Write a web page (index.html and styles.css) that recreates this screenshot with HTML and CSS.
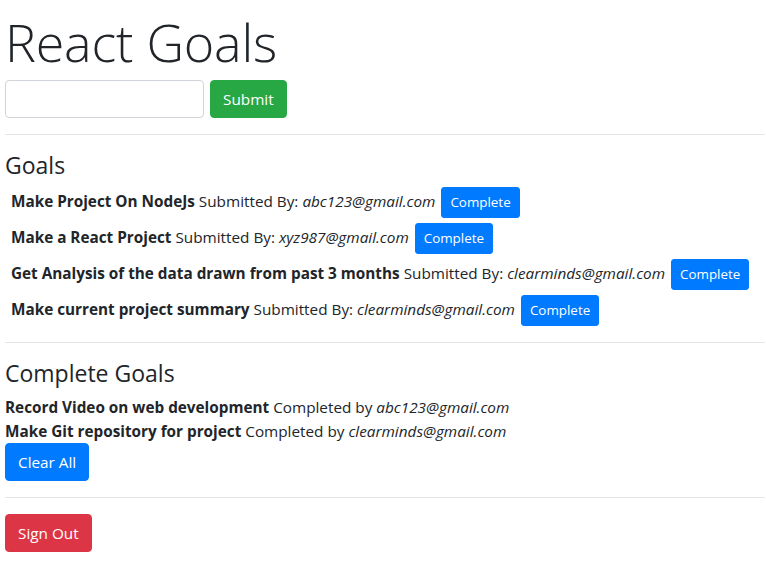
FILE: index.html
```html
<!DOCTYPE html>
<html lang="en">
<head>
<meta charset="utf-8">
<title>React Goals</title>
<link rel="stylesheet" href="styles.css">
</head>
<body>
<div class="app">
  <h1 class="title">React Goals</h1>
  <form class="add-form">
    <input class="field" type="text">
    <button type="button" class="btn btn-success">Submit</button>
  </form>
  <hr class="rule">
  <h4 class="heading">Goals</h4>
  <div class="goal">
    <span class="goal-text"><strong>Make Project On NodeJs</strong> Submitted By: <em>abc123@gmail.com</em></span>
    <button type="button" class="btn btn-primary btn-sm">Complete</button>
  </div>
  <div class="goal">
    <span class="goal-text"><strong>Make a React Project</strong> Submitted By: <em>xyz987@gmail.com</em></span>
    <button type="button" class="btn btn-primary btn-sm">Complete</button>
  </div>
  <div class="goal">
    <span class="goal-text"><strong>Get Analysis of the data drawn from past 3 months</strong> Submitted By: <em>clearminds@gmail.com</em></span>
    <button type="button" class="btn btn-primary btn-sm">Complete</button>
  </div>
  <div class="goal">
    <span class="goal-text"><strong>Make current project summary</strong> Submitted By: <em>clearminds@gmail.com</em></span>
    <button type="button" class="btn btn-primary btn-sm">Complete</button>
  </div>
  <hr class="rule">
  <h4 class="heading">Complete Goals</h4>
  <div class="done"><strong>Record Video on web development</strong> Completed by <em>abc123@gmail.com</em></div>
  <div class="done"><strong>Make Git repository for project</strong> Completed by <em>clearminds@gmail.com</em></div>
  <button type="button" class="btn btn-primary">Clear All</button>
  <hr class="rule">
  <button type="button" class="btn btn-danger">Sign Out</button>
</div>
</body>
</html>
```

FILE: styles.css
```css
html, body {
  margin: 0;
  padding: 0;
  background: #fff;
}

body {
  font-family: "Open Sans", "Noto Sans", sans-serif;
  font-size: 15.3px;
  line-height: 24px;
  color: #212529;
}

.app {
  padding: 5px 1px 0 5px;
}

.title {
  margin: 0 0 2px 0;
  font-size: 52px;
  font-weight: 300;
  line-height: 73px;
  letter-spacing: -0.2px;
}

.add-form {
  display: flex;
  gap: 6px;
  margin: 0;
}

.field {
  box-sizing: border-box;
  width: 199px;
  height: 38px;
  border: 1px solid #ced4da;
  border-radius: 4px;
  padding: 6px 12px;
  font: inherit;
  background: #fff;
}

.rule {
  margin: 16px 0;
  border: 0;
  border-top: 1px solid rgba(0, 0, 0, 0.1);
  height: 0;
}

.heading {
  margin: 0 0 8px 0;
  font-size: 23px;
  font-weight: 500;
  line-height: 28px;
}

strong {
  font-weight: 700;
}

.goal {
  display: flex;
  align-items: flex-start;
  gap: 6px;
  margin: 0 0 5px 0;
  padding-left: 6px;
}

.goal-text {
  padding-top: 2px;
  white-space: nowrap;
}

.btn {
  box-sizing: border-box;
  display: inline-block;
  border: 1px solid transparent;
  border-radius: 4px;
  padding: 6px 12px;
  height: 38px;
  font-family: inherit;
  font-size: 15.3px;
  line-height: 24px;
  color: #fff;
  cursor: pointer;
  white-space: nowrap;
}

.btn-sm {
  padding: 4px 8px;
  height: 31px;
  font-size: 13.4px;
  line-height: 21px;
  border-radius: 3px;
}

.btn-success {
  background: #28a745;
  border-color: #28a745;
}

.btn-primary {
  background: #007bff;
  border-color: #007bff;
}

.btn-danger {
  background: #dc3545;
  border-color: #dc3545;
}
```
